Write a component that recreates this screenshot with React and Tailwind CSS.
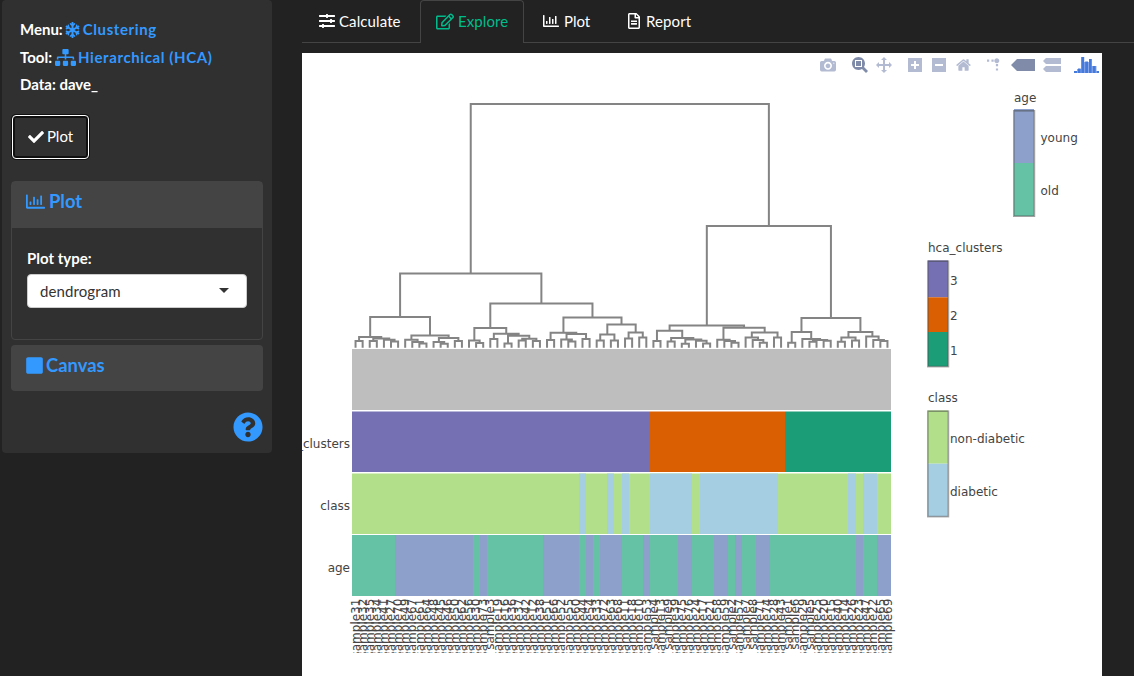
import React from "react";
import {
  FaSnowflake,
  FaSitemap,
  FaCheck,
  FaRegChartBar,
  FaSquare,
  FaQuestionCircle,
  FaSlidersH,
  FaRegEdit,
  FaRegFileAlt,
} from "react-icons/fa";

const X0 = 352;
const X1 = 891;
const COUNT = 76;
const STEP = (X1 - X0) / COUNT;
const LEAF_Y = 347.7;

// Sample numbers in leaf order
const SAMPLES = [
  31, 32, 35, 34, 41, 27, 70, 49, 67, 61, 64, 48, 45, 46, 50, 62, 56, 30, 73, 3,
  19, 16, 36, 37, 42, 12, 38, 51, 66, 52, 55, 60, 44, 54, 33, 72, 63, 68, 11, 18,
  10, 53, 4, 13, 9, 39, 75, 76, 24, 17, 21, 58, 59, 2, 57, 7, 8, 71, 74, 28,
  43, 1, 6, 29, 5, 25, 20, 15, 40, 14, 26, 23, 47, 22, 65, 69,
];

// A node is [height, left, right]; 0 is a leaf
const L = 0;
const TREE = [
  104,
  [
    273.4,
    [
      317,
      [337, [341, L, L], [338.4, [341, L, L], [339.7, L, [341.4, L, L]]]],
      [
        335.6,
        [339.7, L, [342, L, [343.4, L, L]]],
        [338, [342, L, [343.7, L, L]], [341, L, L]],
      ],
    ],
    [
      303.6,
      [
        328,
        [340.4, L, [343, L, L]],
        [333.7, [339, L, L], [335.7, [343.4, L, L], [338.7, [340.4, L, L], [341, L, L]]]],
      ],
      [
        317.4,
        [332.7, [340, L, L], [334, [339.4, L, [341.4, L, L]], [339, L, L]]],
        [324.6, [334.4, [340.4, L, L], [340.4, L, L]], [332.4, [338.4, L, L], [337.4, L, L]]],
      ],
    ],
  ],
  [
    226,
    [
      325.4,
      [
        330.7,
        [341, L, L],
        [338, [341.4, L, L], [339.4, [343.7, L, L], [340.7, L, [343.4, L, L]]]],
      ],
      [
        327.7,
        [339.7, L, [341, L, [342.7, L, L]]],
        [332.4, [337.4, L, [340, L, [342.7, L, L]]], [337.4, L, L]],
      ],
    ],
    [
      318,
      [332, [342.7, L, L], [339, L, [340, [341.7, L, L], [340.7, L, L]]]],
      [
        332,
        [337.4, [341.7, L, L], [340.4, L, L]],
        [336.4, L, [340, L, [341, L, L]]],
      ],
    ],
  ],
];

function dendrogramPath(tree) {
  let leaf = 0;
  let d = "";
  const walk = (node) => {
    if (node === 0) {
      leaf += 1;
      return [X0 + STEP * (leaf - 0.5), LEAF_Y];
    }
    const [y, left, right] = node;
    const [lx, ly] = walk(left);
    const [rx, ry] = walk(right);
    d += `M${lx} ${ly}V${y}H${rx}V${ry}`;
    return [(lx + rx) / 2, y];
  };
  walk(tree);
  return d;
}

// Ranges of leaf indexes, [from, to)
const CLUSTERS = [
  [0, 42, "#7570b3"],
  [42, 61, "#d95f02"],
  [61, 76, "#1b9e77"],
];
const DIABETIC = [[32, 33], [36, 37], [38, 39], [42, 48], [49, 60], [70, 71], [72, 74]];
const YOUNG = [
  [6, 17], [18, 19], [27, 32], [33, 34], [35, 38], [41, 42], [46, 48],
  [51, 53], [54, 55], [57, 59], [71, 72], [74, 76],
];

function Runs({ runs, y, height, fill }) {
  return runs.map(([from, to, colour]) => (
    <rect
      key={from}
      x={Math.round(X0 + from * STEP)}
      y={y}
      width={Math.round(X0 + to * STEP) - Math.round(X0 + from * STEP)}
      height={height}
      fill={colour || fill}
    />
  ));
}

// Items are [label, colour, top, bottom, text baseline]
function ColourBar({ x, y, title, items, labelX }) {
  return (
    <g>
      <text x={x} y={y - 8}>{title}</text>
      {items.map(([label, colour, top, bottom, baseline]) => (
        <g key={label}>
          <rect x={x} y={top} width="20" height={bottom - top} fill={colour} />
          <text x={labelX} y={baseline}>{label}</text>
        </g>
      ))}
      <rect x={x - 0.2} y={y + 0.8} width="20.6" height="105.4" fill="none" stroke="#444" strokeOpacity="0.5" strokeWidth="1.6" />
    </g>
  );
}

function Chart() {
  return (
    <svg
      className="block h-[623px] w-[800px] bg-white"
      viewBox="302 53 800 623"
      fontFamily="'DejaVu Sans', sans-serif"
      fontSize="12"
      fill="#444"
    >
      <path d={dendrogramPath(TREE)} fill="none" stroke="#848484" strokeWidth="2" />
      <rect x="352" y="349" width="539" height="61" fill="#bebebe" />
      <Runs runs={CLUSTERS} y={411.5} height={60.5} />
      <rect x="352" y="473.5" width="539" height="60.5" fill="#b2df8a" />
      <Runs runs={DIABETIC} y={473.5} height={60.5} fill="#a6cee3" />
      <rect x="352" y="535" width="539" height="61" fill="#66c2a5" />
      <Runs runs={YOUNG} y={535} height={61} fill="#8da0cb" />
      <g textAnchor="end">
        <text x="350" y="448">hca_clusters</text>
        <text x="350" y="510">class</text>
        <text x="350" y="572">age</text>
      </g>
      <clipPath id="ticks">
        <rect x="302" y="590" width="640" height="62.7" />
      </clipPath>
      <g textAnchor="end" clipPath="url(#ticks)">
        {SAMPLES.map((n, i) => (
          <text key={n} transform={`translate(${X0 + STEP * (i + 0.5) + 4.2} 598.6) rotate(-90)`}>
            {`sample${n}`}
          </text>
        ))}
      </g>
      <ColourBar
        x={1014}
        y={110}
        title="age"
        labelX={1040.5}
        items={[["young", "#8da0cb", 109, 163, 142], ["old", "#66c2a5", 163, 216, 195]]}
      />
      <ColourBar
        x={928}
        y={260.4}
        title="hca_clusters"
        labelX={950}
        items={[
          ["3", "#7570b3", 260.4, 297.3, 285],
          ["2", "#d95f02", 297.3, 332, 320],
          ["1", "#1b9e77", 332, 366.4, 355],
        ]}
      />
      <ColourBar
        x={928}
        y={410.4}
        title="class"
        labelX={950}
        items={[
          ["non-diabetic", "#b2df8a", 410.4, 463.7, 443],
          ["diabetic", "#a6cee3", 463.7, 516.4, 496],
        ]}
      />
    </svg>
  );
}

const FLIP = "matrix(1 0 0 -1 0 850)";

function ModeIcon({ className, box, d, transform = FLIP }) {
  return (
    <svg className={className} viewBox={`0 0 ${box} 1000`}>
      <path d={d} transform={transform} fill="currentColor" />
    </svg>
  );
}

function ModeBar() {
  return (
    <div className="absolute top-[4px] left-[518px] flex items-start text-[#b3bbd2]">
      <ModeIcon className="h-4 w-4" box={1000} d="m500 450c-83 0-150-67-150-150 0-83 67-150 150-150 83 0 150 67 150 150 0 83-67 150-150 150z m400 150h-120c-16 0-34 13-39 29l-31 93c-6 15-23 28-40 28h-340c-16 0-34-13-39-28l-31-94c-6-15-23-28-40-28h-120c-55 0-100-45-100-100v-450c0-55 45-100 100-100h800c55 0 100 45 100 100v450c0 55-45 100-100 100z m-400-550c-138 0-250 112-250 250 0 138 112 250 250 250 138 0 250-112 250-250 0-138-112-250-250-250z m365 380c-19 0-35 16-35 35 0 19 16 35 35 35 19 0 35-16 35-35 0-19-16-35-35-35z" />
      <ModeIcon className="ml-4 h-4 w-4 text-[#7f8ba8]" box={1000} d="m1000-25l-250 251c40 63 63 138 63 218 0 224-182 406-407 406-224 0-406-182-406-406s183-406 407-406c80 0 155 22 218 62l250-250 125 125z m-812 250l0 438 437 0 0-438-437 0z m62 375l313 0 0-312-313 0 0 312z" />
      <ModeIcon className="ml-2 h-4 w-4" box={1000} d="m1000 350l-187 188 0-125-250 0 0 250 125 0-188 187-187-187 125 0 0-250-250 0 0 125-188-188 186-187 0 125 252 0 0-250-125 0 187-188 188 188-125 0 0 250 250 0 0-126 187 188z" />
      <ModeIcon className="ml-4 h-4 w-[14px]" box={875} d="m1 787l0-875 875 0 0 875-875 0z m687-500l-187 0 0-187-125 0 0 187-188 0 0 125 188 0 0 187 125 0 0-187 187 0 0-125z" />
      <ModeIcon className="ml-[10px] h-4 w-[14px]" box={875} d="m0 788l0-876 875 0 0 876-875 0z m688-500l-500 0 0 125 500 0 0-125z" />
      <ModeIcon className="ml-[10px] h-4 w-[15px]" box={928.6} d="m786 296v-267q0-15-11-26t-25-10h-214v214h-143v-214h-214q-15 0-25 10t-11 26v267q0 1 0 2t0 2l321 264 321-264q1-1 1-4z m124 39l-34-41q-5-5-12-6h-2q-7 0-12 3l-386 322-386-322q-7-4-13-4-7 2-12 7l-35 41q-4 5-3 13t6 12l401 334q18 15 42 15t43-15l136-114v109q0 8 5 13t13 5h107q8 0 13-5t5-13v-227l122-102q5-5 6-12t-4-13z" />
      <ModeIcon className="ml-4 h-4 w-4" box={1000} transform="matrix(1.5 0 0 -1.5 0 850)" d="M512 409c0-57-46-104-103-104-57 0-104 47-104 104 0 57 47 103 104 103 57 0 103-46 103-103z m-327-39l92 0 0 92-92 0z m-185 0l92 0 0 92-92 0z m370-186l92 0 0 93-92 0z m0-184l92 0 0 92-92 0z" />
      <ModeIcon className="ml-2 h-4 w-6 text-[#7f8ba8]" box={1500} d="m375 725l0 0-375-375 375-374 0-1 1125 0 0 750-1125 0z" />
      <ModeIcon className="ml-2 h-4 w-[18px]" box={1125} d="m187 786l0 2-187-188 188-187 0 0 937 0 0 373-938 0z m0-499l0 1-187-188 188-188 0 0 937 0 0 376-938-1z" />
      <svg className="ml-[13px] h-4 w-[25px]" viewBox="0 0 25 16" fill="#447adb">
        <g fill="#8ba9ea">
          <rect x="3" y="12" width="4.5" height="4" />
          <rect x="10" y="5" width="5" height="11" />
          <rect x="17.5" y="9" width="5" height="7" />
        </g>
        <rect x="0" y="14" width="3" height="2" />
        <rect x="4" y="11.5" width="2.6" height="4.5" />
        <rect x="7.2" y="0" width="3" height="16" />
        <rect x="11.2" y="4.5" width="2.8" height="11.5" />
        <rect x="15" y="2" width="2.8" height="14" />
        <rect x="18.8" y="9" width="2.8" height="7" />
        <rect x="22.4" y="14" width="2.6" height="2" />
      </svg>
    </div>
  );
}

function Sidebar() {
  return (
    <aside className="ml-[2px] h-[453px] w-[270px] shrink-0 rounded bg-[#303030] px-[9px]">
      <div className="pt-4 pl-[9px] text-[15px] leading-[27.5px] font-bold">
        <div className="flex h-[27.5px] items-center">
          Menu:
          <FaSnowflake className="ml-[2px] h-[16px] w-[15px] text-[#3399ff]" />
          <span className="ml-[3px] text-[15px] tracking-[0.6px] text-[#3399ff]">Clustering</span>
        </div>
        <div className="flex h-[27.5px] items-center">
          Tool:
          <FaSitemap className="ml-[3px] h-[17px] w-[21px] text-[#3399ff]" />
          <span className="ml-[2px] text-[15px] tracking-[0.6px] text-[#3399ff]">Hierarchical (HCA)</span>
        </div>
        <div>Data: dave_</div>
      </div>
      <button className="mt-[16px] ml-px flex h-[44px] w-[77px] items-center justify-center gap-[3px] rounded-[4px] border border-white bg-[#303030] text-[15px] shadow-[inset_0_0_0_2px_#101010,0_0_0_1px_#101010]">
        <FaCheck className="h-[16px] w-[16px]" />
        Plot
      </button>
      <section className="mt-[22px] h-[159px] rounded-[4px] border border-[#444]">
        <h4 className="flex h-[46px] items-start bg-[#444] pt-[7px] pl-[14px] text-[18.4px] leading-6 font-bold text-[#3399ff]">
          <FaRegChartBar className="mt-[3px] mr-1 h-[19px] w-[19px]" />
          Plot
        </h4>
        <div className="px-[15px] pt-[20px]">
          <label className="block text-[15px] leading-[21px] font-bold">Plot type:</label>
          <div className="mt-[5px] flex h-[34px] items-center justify-between rounded-[4px] border border-[#ccc] bg-white pt-px pr-[17px] pl-3 text-[15px] text-[#333]">
            <span className="tracking-[0.1px]">dendrogram</span>
            <svg className="-mt-px h-[5px] w-[10px]" viewBox="0 0 10 5">
              <path d="M0 0h10L5 5z" fill="#333" />
            </svg>
          </div>
        </div>
      </section>
      <section className="mt-[5px] h-[46px] rounded-[4px] bg-[#444]">
        <h4 className="flex items-start pt-[8px] pl-[15px] text-[18.4px] leading-6 font-bold text-[#3399ff]">
          <FaSquare className="mt-[3px] mr-[3px] h-[19px] w-[17px]" />
          Canvas
        </h4>
      </section>
      <div className="mt-[21px] flex justify-end">
        <FaQuestionCircle className="h-[30px] w-[30px] text-[#3399ff]" />
      </div>
    </aside>
  );
}

function Tabs() {
  return (
    <nav className="flex h-[43px] border-b border-[#444] text-[15px]">
      <div className="flex w-[118px] items-center gap-1 pl-[17px] tracking-[0.1px]">
        <FaSlidersH className="h-[16px] w-[16px]" />
        Calculate
      </div>
      <div className="-mb-px flex w-[104px] items-center gap-1 rounded-t-[4px] border border-b-0 border-[#444] bg-[#222] pb-px pl-[15px] tracking-[0.1px] text-[#00bc8c]">
        <FaRegEdit className="h-[17px] w-[18px]" />
        Explore
      </div>
      <div className="flex w-[103px] items-center gap-[5px] pl-[19px]">
        <FaRegChartBar className="h-4 w-4" />
        Plot
      </div>
      <div className="flex items-center gap-[6px] tracking-[0.1px]">
        <FaRegFileAlt className="ml-px h-[16px] w-[12px]" />
        Report
      </div>
    </nav>
  );
}

export default function App() {
  return (
    <div className="flex h-[676px] w-[1134px] items-start overflow-hidden bg-[#222] font-['Lato',sans-serif] text-white">
      <Sidebar />
      <main className="ml-[30px] flex-1">
        <Tabs />
        <div className="relative mt-[10px] w-[800px]">
          <Chart />
          <ModeBar />
        </div>
      </main>
    </div>
  );
}
